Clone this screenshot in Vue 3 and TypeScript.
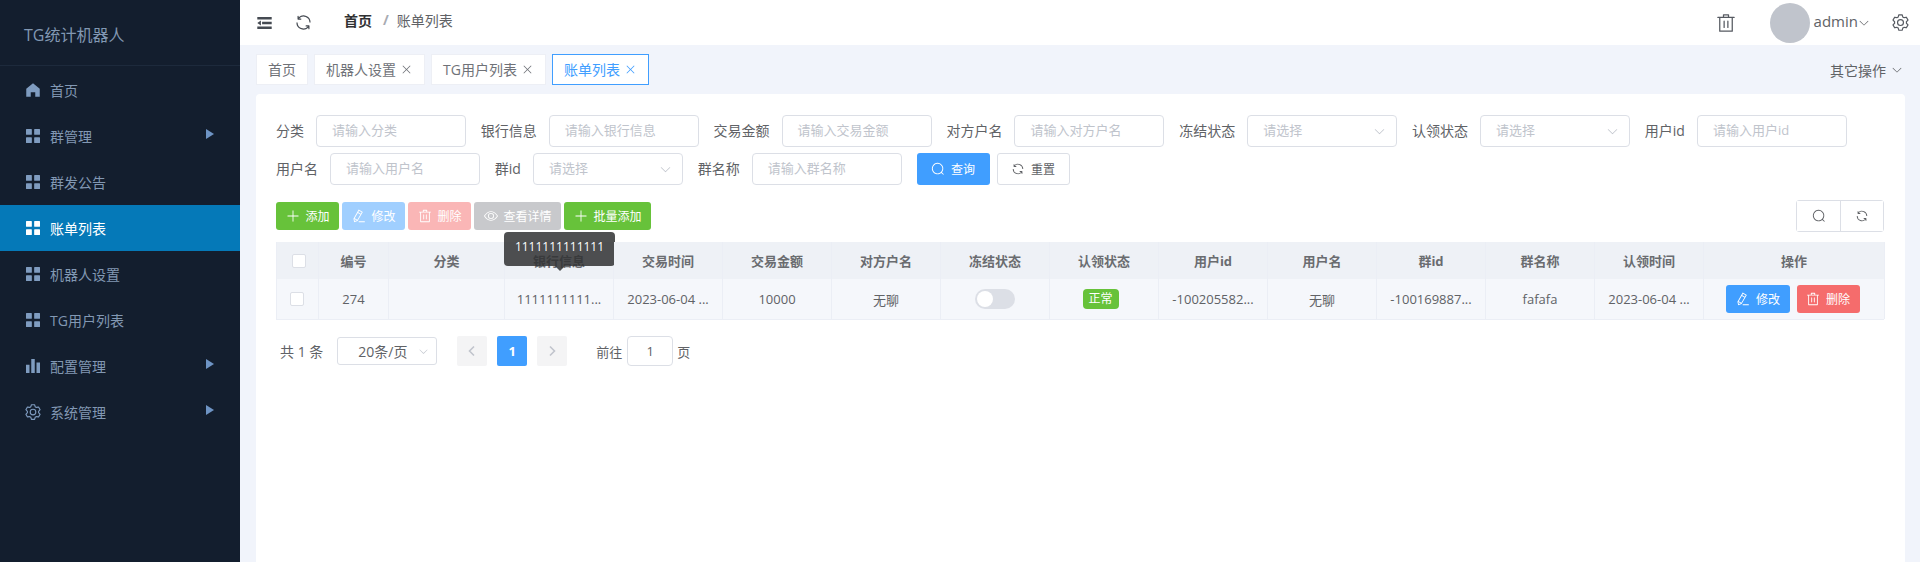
<script setup lang="ts">
interface MenuItem {
  label: string;
  icon: string;
  caret?: boolean;
  active?: boolean;
}

interface FilterItem {
  label: string;
  placeholder: string;
  select?: boolean;
}

interface ToolButton {
  label: string;
  icon: string;
  tone: string;
}

const menu: MenuItem[] = [
  { label: "首页", icon: "i-home" },
  { label: "群管理", icon: "i-grid", caret: true },
  { label: "群发公告", icon: "i-grid" },
  { label: "账单列表", icon: "i-grid", active: true },
  { label: "机器人设置", icon: "i-grid" },
  { label: "TG用户列表", icon: "i-grid" },
  { label: "配置管理", icon: "i-bars", caret: true },
  { label: "系统管理", icon: "i-gear", caret: true },
];

const tabs = [
  { label: "首页", closable: false, active: false },
  { label: "机器人设置", closable: true, active: false },
  { label: "TG用户列表", closable: true, active: false },
  { label: "账单列表", closable: true, active: true },
];

const filters: FilterItem[] = [
  { label: "分类", placeholder: "请输入分类" },
  { label: "银行信息", placeholder: "请输入银行信息" },
  { label: "交易金额", placeholder: "请输入交易金额" },
  { label: "对方户名", placeholder: "请输入对方户名" },
  { label: "冻结状态", placeholder: "请选择", select: true },
  { label: "认领状态", placeholder: "请选择", select: true },
  { label: "用户id", placeholder: "请输入用户id" },
  { label: "用户名", placeholder: "请输入用户名" },
  { label: "群id", placeholder: "请选择", select: true },
  { label: "群名称", placeholder: "请输入群名称" },
];

const toolButtons: ToolButton[] = [
  { label: "添加", icon: "i-plus", tone: "green" },
  { label: "修改", icon: "i-edit", tone: "blue-off" },
  { label: "删除", icon: "i-trash", tone: "red-off" },
  { label: "查看详情", icon: "i-eye", tone: "grey-off" },
  { label: "批量添加", icon: "i-plus", tone: "green" },
];

const headers = ["编号", "分类", "银行信息", "交易时间", "交易金额", "对方户名", "冻结状态", "认领状态", "用户id", "用户名", "群id", "群名称", "认领时间", "操作"];
</script>

<template>
  <div class="page">
    <svg class="sprite" aria-hidden="true">
      <symbol id="i-home" viewBox="0 0 1024 1024"><path d="M512 128 128 447.936V896h255.936V640H640v256h255.936V447.936z" /></symbol>
      <symbol id="i-grid" viewBox="128 128 768 768"><path d="M160 448a32 32 0 0 1-32-32V160a32 32 0 0 1 32-32h256a32 32 0 0 1 32 32V416a32 32 0 0 1-32 32H160zm448 0a32 32 0 0 1-32-32V160a32 32 0 0 1 32-32h256a32 32 0 0 1 32 32V416a32 32 0 0 1-32 32H608zM160 896a32 32 0 0 1-32-32V608a32 32 0 0 1 32-32h256a32 32 0 0 1 32 32v256a32 32 0 0 1-32 32H160zm448 0a32 32 0 0 1-32-32V608a32 32 0 0 1 32-32h256a32 32 0 0 1 32 32v256a32 32 0 0 1-32 32H608z" /></symbol>
      <symbol id="i-bars" viewBox="128 128 768 768"><path d="M416 896V128h192v768H416zm-288 0V448h192v448H128zm576 0V320h192v576H704z" /></symbol>
      <symbol id="i-gear" viewBox="0 0 1024 1024"><path d="M600.704 64a32 32 0 0 1 30.464 22.208l35.2 109.376c14.784 7.232 28.928 15.36 42.432 24.512l112.384-24.192a32 32 0 0 1 34.432 15.36L944.32 364.8a32 32 0 0 1-4.032 37.504l-77.12 85.12a357.12 357.12 0 0 1 0 49.024l77.12 85.248a32 32 0 0 1 4.032 37.504l-88.704 153.6a32 32 0 0 1-34.432 15.296L708.8 803.904c-13.44 9.088-27.648 17.28-42.368 24.512l-35.264 109.376A32 32 0 0 1 600.704 960H423.296a32 32 0 0 1-30.464-22.208L357.696 828.48a351.616 351.616 0 0 1-42.56-24.64l-112.32 24.256a32 32 0 0 1-34.432-15.36L79.68 659.2a32 32 0 0 1 4.032-37.504l77.12-85.248a357.12 357.12 0 0 1 0-48.896l-77.12-85.248A32 32 0 0 1 79.68 364.8l88.704-153.6a32 32 0 0 1 34.432-15.296l112.32 24.256c13.568-9.152 27.776-17.408 42.56-24.64l35.2-109.312A32 32 0 0 1 423.232 64H600.64zm-23.424 64H446.72l-36.352 113.088-24.512 11.968a294.113 294.113 0 0 0-34.816 20.096l-22.656 15.36-116.224-25.088-65.28 113.152 79.68 88.192-1.92 27.136a293.12 293.12 0 0 0 0 40.192l1.92 27.136-79.808 88.192 65.344 113.152 116.224-25.024 22.656 15.296a294.113 294.113 0 0 0 34.816 20.096l24.512 11.968L446.72 896h130.688l36.48-113.152 24.448-11.904a288.282 288.282 0 0 0 34.752-20.096l22.592-15.296 116.288 25.024 65.28-113.152-79.744-88.192 1.92-27.136a293.12 293.12 0 0 0 0-40.256l-1.92-27.136 79.808-88.128-65.344-113.152-116.288 24.96-22.592-15.232a287.616 287.616 0 0 0-34.752-20.096l-24.448-11.904L577.344 128zM512 320a192 192 0 1 1 0 384 192 192 0 0 1 0-384zm0 64a128 128 0 1 0 0 256 128 128 0 0 0 0-256z" /></symbol>
      <symbol id="i-fold" viewBox="128 192 768 640"><path d="M896 192H128v128h768V192zm0 256H384v128h512V448zm0 256H128v128h768V704zM320 384 128 512l192 128V384z" /></symbol>
      <symbol id="i-refresh" viewBox="0 0 1024 1024"><path d="M771.776 794.88A384 384 0 0 1 128 512h64a320 320 0 0 0 555.712 216.448H654.72a32 32 0 1 1 0-64h149.056a32 32 0 0 1 32 32v148.928a32 32 0 1 1-64 0v-50.56zM276.288 295.616h92.992a32 32 0 0 1 0 64H220.16a32 32 0 0 1-32-32V178.56a32 32 0 0 1 64 0v50.56A384 384 0 0 1 896.128 512h-64a320 320 0 0 0-555.84-216.384z" /></symbol>
      <symbol id="i-trash" viewBox="0 0 1024 1024"><path d="M160 256H96a32 32 0 0 1 0-64h256V95.936a32 32 0 0 1 32-32h256a32 32 0 0 1 32 32V192h256a32 32 0 1 1 0 64h-64v672a32 32 0 0 1-32 32H192a32 32 0 0 1-32-32V256zm448-64v-64H416v64h192zM224 896h576V256H224v640zm192-128a32 32 0 0 1-32-32V416a32 32 0 0 1 64 0v320a32 32 0 0 1-32 32zm192 0a32 32 0 0 1-32-32V416a32 32 0 0 1 64 0v320a32 32 0 0 1-32 32z" /></symbol>
      <symbol id="i-chevron" viewBox="0 0 1024 1024"><path d="M831.872 340.864 512 652.672 192.128 340.864a30.592 30.592 0 0 0-42.752 0 29.12 29.12 0 0 0 0 41.6L489.664 714.24a32 32 0 0 0 44.672 0l340.288-331.712a29.12 29.12 0 0 0 0-41.728 30.592 30.592 0 0 0-42.752 0z" /></symbol>
      <symbol id="i-close" viewBox="0 0 1024 1024"><path d="M764.288 214.592 512 466.88 259.712 214.592a31.936 31.936 0 0 0-45.12 45.12L466.752 512 214.528 764.224a31.936 31.936 0 1 0 45.12 45.184L512 557.184l252.288 252.288a31.936 31.936 0 0 0 45.12-45.12L557.12 512.064l252.288-252.352a31.936 31.936 0 1 0-45.12-45.184z" /></symbol>
      <symbol id="i-plus" viewBox="0 0 1024 1024"><path d="M480 480V128a32 32 0 0 1 64 0v352h352a32 32 0 1 1 0 64H544v352a32 32 0 1 1-64 0V544H128a32 32 0 0 1 0-64h352z" /></symbol>
      <symbol id="i-edit" viewBox="0 0 1024 1024"><path d="m199.04 672.64 193.984 112 224-387.968-193.92-112-224 388.032zm-23.872 60.16 32.896 148.288 144.896-45.696L175.168 732.8zM455.04 229.248l193.92 112 56.704-98.112-193.984-112-56.64 98.112zM104.32 708.8l384-665.024 304.768 175.936L409.152 884.8h.064l-248.448 78.336L104.32 708.8zm384 254.272v-64h448v64h-448z" /></symbol>
      <symbol id="i-eye" viewBox="0 0 1024 1024"><path d="M512 160c320 0 512 352 512 352S832 864 512 864 0 512 0 512s192-352 512-352zm0 64c-225.28 0-384.128 208.064-436.8 288 52.608 79.872 211.456 288 436.8 288 225.28 0 384.128-208.064 436.8-288-52.608-79.872-211.456-288-436.8-288zm0 64a224 224 0 1 1 0 448 224 224 0 0 1 0-448zm0 64a160.192 160.192 0 0 0-160 160c0 88.192 71.744 160 160 160s160-71.808 160-160-71.744-160-160-160z" /></symbol>
      <symbol id="i-search" viewBox="0 0 1024 1024"><path d="m795.904 750.72 124.992 124.928a32 32 0 0 1-45.248 45.248L750.656 795.904a416 416 0 1 1 45.248-45.248zM480 832a352 352 0 1 0 0-704 352 352 0 0 0 0 704z" /></symbol>
    </svg>

    <aside class="sidebar">
      <div class="logo">TG统计机器人</div>
      <ul class="menu">
        <li v-for="item in menu" :key="item.label" class="menu-item" :class="{ active: item.active }">
          <svg class="menu-icon" :class="{ large: item.icon === 'i-gear' || item.icon === 'i-home' }"><use :href="'#' + item.icon" /></svg>
          <span class="menu-label">{{ item.label }}</span>
          <span v-if="item.caret" class="caret"></span>
        </li>
      </ul>
    </aside>

    <div class="content">
      <header class="topbar">
        <svg class="top-icon fold"><use href="#i-fold" /></svg>
        <svg class="top-icon reload"><use href="#i-refresh" /></svg>
        <nav class="crumbs">
          <b>首页</b>
          <i>/</i>
          <span>账单列表</span>
        </nav>
        <svg class="top-icon bin"><use href="#i-trash" /></svg>
        <div class="avatar"></div>
        <span class="user">admin</span>
        <svg class="user-chevron"><use href="#i-chevron" /></svg>
        <svg class="top-icon cog"><use href="#i-gear" /></svg>
      </header>

      <div class="tabs">
        <div v-for="tab in tabs" :key="tab.label" class="tab" :class="{ active: tab.active }">
          <span>{{ tab.label }}</span>
          <svg v-if="tab.closable" class="tab-close"><use href="#i-close" /></svg>
        </div>
        <div class="tab-more">
          <span>其它操作</span>
          <svg class="more-chevron"><use href="#i-chevron" /></svg>
        </div>
      </div>

      <main class="card">
        <form class="filters" @submit.prevent>
          <div v-for="f in filters" :key="f.label" class="field">
            <label>{{ f.label }}</label>
            <div class="control">
              <span>{{ f.placeholder }}</span>
              <svg v-if="f.select" class="control-chevron"><use href="#i-chevron" /></svg>
            </div>
          </div>
          <div class="form-actions">
            <button class="btn primary" type="button">
              <svg class="btn-icon"><use href="#i-search" /></svg>查询
            </button>
            <button class="btn plain" type="button">
              <svg class="btn-icon"><use href="#i-refresh" /></svg>重置
            </button>
          </div>
        </form>

        <div class="toolbar">
          <button v-for="b in toolButtons" :key="b.label + b.icon" class="btn" :class="b.tone" type="button">
            <svg class="btn-icon"><use :href="'#' + b.icon" /></svg>{{ b.label }}
          </button>
          <div class="tool-group">
            <button type="button"><svg class="group-icon"><use href="#i-search" /></svg></button>
            <button type="button"><svg class="group-icon"><use href="#i-refresh" /></svg></button>
          </div>
        </div>

        <div class="table">
          <div class="cell head"><span class="check head-check"></span></div>
          <div v-for="h in headers" :key="h" class="cell head">
            {{ h }}
            <div v-if="h === '银行信息'" class="tooltip">1111111111111</div>
          </div>

          <div class="cell"><span class="check row-check"></span></div>
          <div class="cell">274</div>
          <div class="cell"></div>
          <div class="cell">1111111111...</div>
          <div class="cell">2023-06-04 ...</div>
          <div class="cell">10000</div>
          <div class="cell">无聊</div>
          <div class="cell"><span class="switch"></span></div>
          <div class="cell"><span class="tag">正常</span></div>
          <div class="cell">-100205582...</div>
          <div class="cell">无聊</div>
          <div class="cell">-100169887...</div>
          <div class="cell">fafafa</div>
          <div class="cell">2023-06-04 ...</div>
          <div class="cell ops">
            <button class="btn primary" type="button"><svg class="btn-icon"><use href="#i-edit" /></svg>修改</button>
            <button class="btn danger" type="button"><svg class="btn-icon"><use href="#i-trash" /></svg>删除</button>
          </div>
        </div>

        <div class="pager">
          <span class="total">共 1 条</span>
          <div class="size">
            <span>20条/页</span>
            <svg class="size-chevron"><use href="#i-chevron" /></svg>
          </div>
          <button class="page-btn" type="button"><svg viewBox="0 0 10 12"><path d="M7 1.5 2.5 6 7 10.5" /></svg></button>
          <button class="page-btn current" type="button">1</button>
          <button class="page-btn" type="button"><svg viewBox="0 0 10 12"><path d="M3 1.5 7.5 6 3 10.5" /></svg></button>
          <span class="goto">前往</span>
          <div class="goto-input">1</div>
          <span class="goto-unit">页</span>
        </div>
      </main>
    </div>
  </div>
</template>

<style scoped>
.page {
  display: flex;
  height: 562px;
  overflow: hidden;
  background: #f1f4fb;
  color: #606266;
  font-family: "Open Sans", "Noto Sans CJK SC", sans-serif;
  font-size: 14px;
}

.sprite {
  display: none;
}

svg {
  fill: currentColor;
  flex: none;
}

/* sidebar */
.sidebar {
  flex: none;
  width: 240px;
  background: #131e2e;
}

.logo {
  height: 65px;
  padding-left: 24px;
  border-bottom: 1px solid #1d2a3c;
  color: #8298b3;
  font-size: 16px;
  line-height: 70px;
}

.menu {
  margin: 0;
  padding: 1px 0 0;
  list-style: none;
}

.menu-item {
  display: flex;
  align-items: center;
  height: 46px;
  padding-left: 26px;
  color: #8298b3;
}

.menu-item.active {
  background: #0579b8;
  color: #fff;
}

.menu-icon {
  width: 14px;
  height: 14px;
  margin-right: 10px;
  color: #7f9cc0;
}

.menu-icon.large {
  width: 18px;
  height: 18px;
  margin: 0 8px 0 -2px;
}

.active .menu-icon {
  color: #fff;
}

.menu-label {
  flex: 1;
  margin-top: -1px;
}

.caret {
  width: 0;
  height: 0;
  margin: -5px 26px 0 0;
  border-top: 5.5px solid transparent;
  border-bottom: 5.5px solid transparent;
  border-left: 8px solid #6e94c4;
}

/* top bar */
.content {
  flex: 1;
  min-width: 0;
}

.topbar {
  display: flex;
  align-items: center;
  height: 45px;
  background: #fff;
}

.top-icon {
  width: 16px;
  height: 16px;
  color: #454a52;
}

.fold {
  width: 15px;
  height: 12px;
  margin-left: 17px;
}

.reload {
  width: 19px;
  height: 19px;
  margin-left: 22px;
}

.crumbs {
  display: flex;
  flex: 1;
  margin: -6px 0 0 31px;
  color: #606266;
}

.crumbs b {
  color: #303133;
}

.crumbs i {
  margin: 0 8px 0 11px;
  color: #a8abb2;
  font-style: normal;
  font-weight: 700;
}

.bin {
  width: 20px;
  height: 20px;
  margin-right: 34px;
  color: #565a61;
}

.avatar {
  width: 40px;
  height: 40px;
  margin-right: 4px;
  border-radius: 50%;
  background: #c0c4cc;
}

.user {
  margin-top: -3px;
  font-size: 15px;
}

.user-chevron {
  width: 12px;
  height: 12px;
  margin: 0 21px 0 0;
}

.cog {
  width: 19px;
  height: 19px;
  margin-right: 10px;
  color: #565a61;
}

/* tags */
.tabs {
  display: flex;
  align-items: center;
  gap: 6px;
  height: 49px;
  padding: 0 17px 0 16px;
}

.tab {
  display: flex;
  align-items: center;
  height: 29px;
  padding: 0 11px;
  border: 1px solid #edeff5;
  background: #fff;
  color: #6f7278;
  font-size: 14px;
}

.tab > span {
  margin-top: -1px;
}

.tab.active {
  border-color: #409eff;
  color: #409eff;
}

.tab-close {
  width: 13px;
  height: 13px;
  margin-left: 4px;
}

.tab-more {
  display: flex;
  align-items: center;
  margin-left: auto;
  font-size: 14px;
}

.more-chevron {
  width: 12px;
  height: 12px;
  margin-left: 5px;
}

/* card */
.card {
  height: 468px;
  margin: 0 15px 0 16px;
  padding: 21px 21px 0 20px;
  border-radius: 4px 4px 0 0;
  background: #fff;
}

.filters {
  display: flex;
  flex-wrap: wrap;
  gap: 6px 14.8px;
}

.field {
  display: flex;
  align-items: center;
  gap: 12px;
  white-space: nowrap;
}

.field label,
.control > span {
  margin-top: -3px;
}

.control {
  display: flex;
  align-items: center;
  justify-content: space-between;
  box-sizing: border-box;
  width: 150px;
  height: 32px;
  padding: 0 10px 0 15px;
  border: 1px solid #dcdfe6;
  border-radius: 4px;
  color: #c0c4cc;
  font-size: 13px;
}

.control-chevron {
  width: 13px;
  height: 13px;
}

.form-actions {
  display: flex;
  gap: 7px;
}

.btn {
  display: inline-flex;
  align-items: center;
  justify-content: center;
  height: 28px;
  padding: 0 9.5px;
  border: 0;
  border-radius: 3px;
  color: #fff;
  font: inherit;
  font-size: 12px;
}

.btn-icon {
  width: 14px;
  height: 14px;
  margin-right: 6px;
}

.form-actions .btn {
  box-sizing: border-box;
  width: 73px;
  height: 32px;
}

.btn.primary {
  background: #409eff;
}

.btn.plain {
  border: 1px solid #dcdfe6;
  background: #fff;
  color: #606266;
}

.btn.green {
  background: #67c23a;
}

.btn.blue-off {
  background: #a0cfff;
}

.btn.red-off {
  background: #fab6b6;
}

.btn.grey-off {
  background: #c8c9cc;
}

.btn.danger {
  background: #f56c6c;
}

.toolbar {
  display: flex;
  align-items: center;
  gap: 3px;
  margin-top: 15px;
}

.tool-group {
  display: flex;
  margin-left: auto;
  border: 1px solid #dcdfe6;
  border-radius: 3px;
}

.tool-group button {
  display: flex;
  align-items: center;
  justify-content: center;
  width: 43px;
  height: 30px;
  padding: 0;
  border: 0;
  background: #fff;
  color: #606266;
}

.tool-group button + button {
  border-left: 1px solid #dcdfe6;
}

.group-icon {
  width: 14px;
  height: 14px;
}

/* table */
.table {
  display: grid;
  grid-template-columns: 42px 70px 116px repeat(11, 109px) 181px;
  margin-top: 10px;
  border-bottom: 1px solid #ebeef5;
  border-left: 1px solid #ebeef5;
  font-size: 13px;
}

.cell {
  position: relative;
  display: flex;
  align-items: center;
  justify-content: center;
  height: 40px;
  border-right: 1px solid #ebeef5;
  background: #f5f7fb;
  white-space: nowrap;
}

.cell.head {
  height: 37px;
  background: #eef1f6;
  color: #6a6c70;
  font-weight: 700;
}

.ops {
  gap: 7px;
  padding-right: 2px;
}

.check {
  box-sizing: border-box;
  width: 14px;
  height: 14px;
  border: 1px solid #dcdfe6;
  border-radius: 2px;
  background: #fff;
}

.head-check {
  margin-left: 2px;
}

.row-check {
  margin-right: 2px;
}

.tooltip {
  position: absolute;
  top: -10px;
  left: -1px;
  width: 111px;
  height: 34px;
  border-radius: 4px;
  background: rgba(48, 49, 51, 0.85);
  color: #fff;
  font-size: 12px;
  font-weight: 400;
  line-height: 30px;
  text-align: center;
}

.tooltip::after {
  content: "";
  position: absolute;
  bottom: -5px;
  left: 50%;
  margin-left: -5px;
  border-top: 5px solid rgba(48, 49, 51, 0.85);
  border-right: 5px solid transparent;
  border-left: 5px solid transparent;
}

.switch {
  position: relative;
  width: 40px;
  height: 20px;
  border-radius: 10px;
  background: #dcdfe6;
}

.switch::after {
  content: "";
  position: absolute;
  top: 2px;
  left: 2px;
  width: 16px;
  height: 16px;
  border-radius: 50%;
  background: #fff;
}

.tag {
  width: 36px;
  height: 20px;
  margin-left: -7px;
  border-radius: 4px;
  background: #67c23a;
  color: #fff;
  font-size: 12px;
  line-height: 20px;
  text-align: center;
}

/* pager */
.pager {
  display: flex;
  align-items: center;
  margin-top: 16px;
  font-size: 13px;
}

.total {
  margin-left: 4px;
  font-size: 14px;
}

.size {
  display: flex;
  align-items: center;
  justify-content: space-between;
  box-sizing: border-box;
  width: 100px;
  height: 28px;
  margin-left: 14px;
  padding: 0 7px 0 20px;
  border: 1px solid #dcdfe6;
  border-radius: 3px;
  font-size: 14px;
}

.size-chevron {
  width: 11px;
  height: 11px;
  color: #c0c4cc;
}

.page-btn {
  display: flex;
  align-items: center;
  justify-content: center;
  width: 30px;
  height: 30px;
  margin-left: 10px;
  padding: 0;
  border: 0;
  border-radius: 2px;
  background: #f4f4f5;
  font: inherit;
  font-weight: 700;
}

.size + .page-btn {
  margin-left: 20px;
}

.page-btn svg {
  width: 10px;
  height: 12px;
  fill: none;
  stroke: #c0c4cc;
  stroke-width: 1.6;
}

.page-btn.current {
  background: #409eff;
  color: #fff;
}

.goto {
  margin-left: 29px;
}

.goto-input {
  box-sizing: border-box;
  width: 46px;
  height: 30px;
  margin: 0 4px 0 5px;
  border: 1px solid #dcdfe6;
  border-radius: 4px;
  line-height: 28px;
  text-align: center;
}
</style>

<style>
body {
  margin: 0;
}
</style>
